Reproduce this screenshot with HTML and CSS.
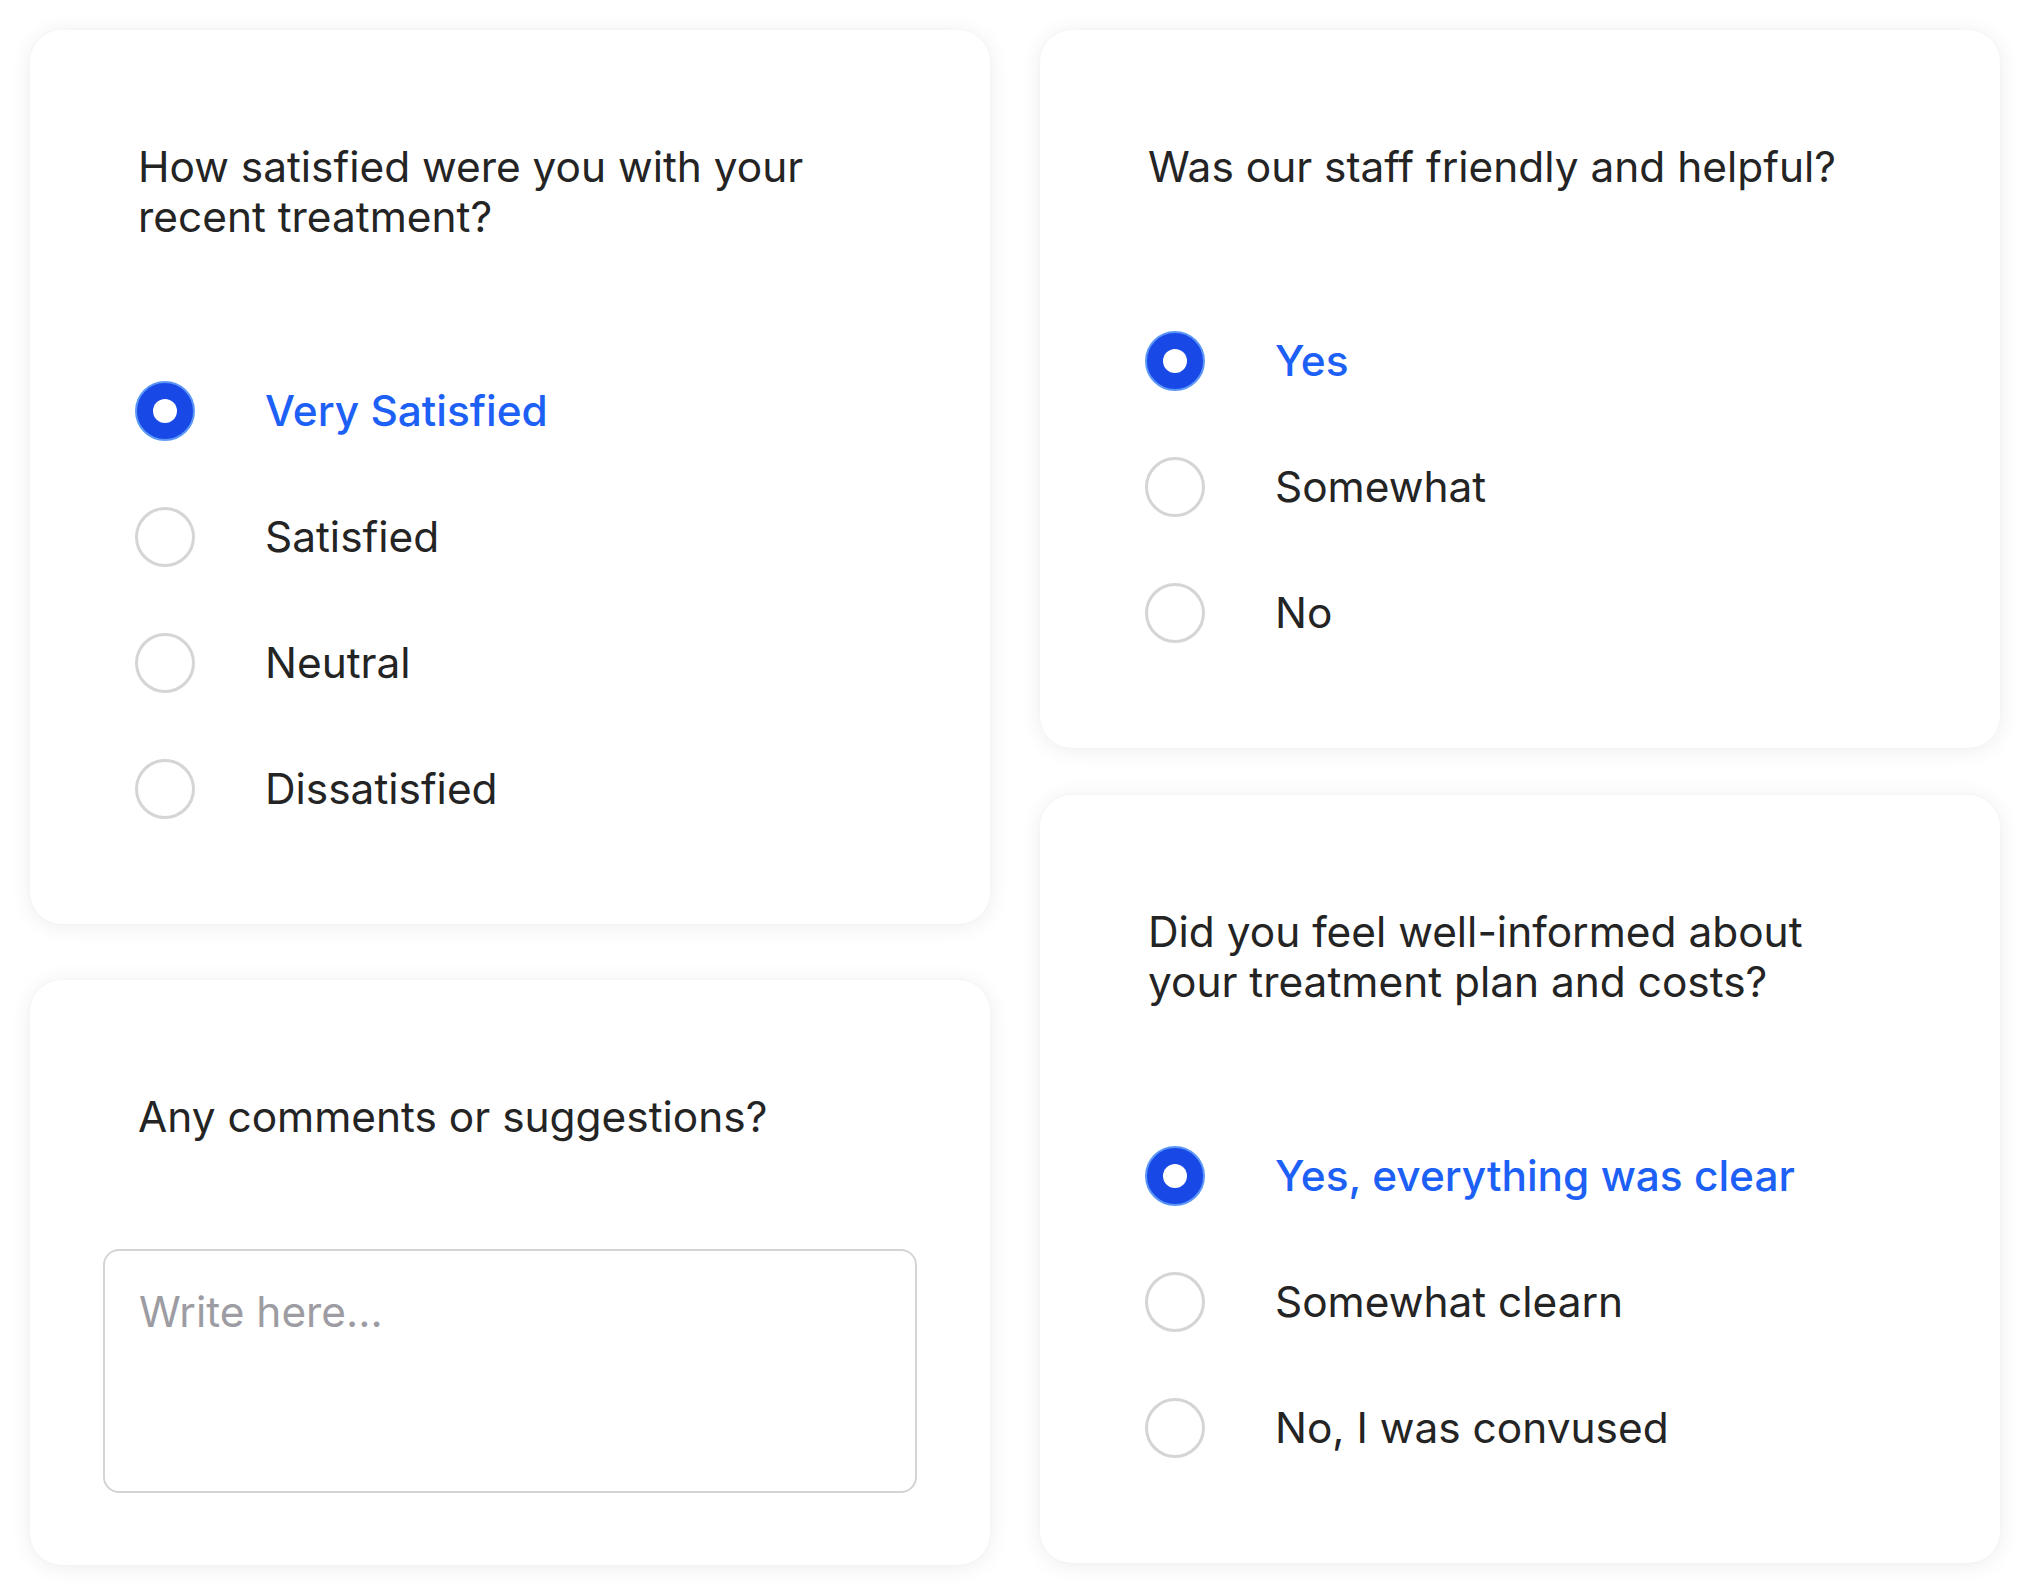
FILE: index.html
```html
<!DOCTYPE html>
<html lang="en">
<head>
<meta charset="utf-8">
<title>Patient feedback survey</title>
<link rel="stylesheet" href="styles.css">
</head>
<body>
<main class="page">
  <div class="col col-left">
    <section class="card">
      <h2 class="question">How satisfied were you with your recent treatment?</h2>
      <div class="options">
        <div class="option selected"><span class="radio"></span><span class="label">Very Satisfied</span></div>
        <div class="option"><span class="radio"></span><span class="label">Satisfied</span></div>
        <div class="option"><span class="radio"></span><span class="label">Neutral</span></div>
        <div class="option"><span class="radio"></span><span class="label">Dissatisfied</span></div>
      </div>
    </section>
    <section class="card card-comment">
      <h2 class="question">Any comments or suggestions?</h2>
      <div class="textarea"><span class="placeholder">Write here...</span></div>
    </section>
  </div>
  <div class="col col-right">
    <section class="card">
      <h2 class="question">Was our staff friendly and helpful?</h2>
      <div class="options">
        <div class="option selected"><span class="radio"></span><span class="label">Yes</span></div>
        <div class="option"><span class="radio"></span><span class="label">Somewhat</span></div>
        <div class="option"><span class="radio"></span><span class="label">No</span></div>
      </div>
    </section>
    <section class="card">
      <h2 class="question">Did you feel well-informed about your treatment plan and costs?</h2>
      <div class="options">
        <div class="option selected"><span class="radio"></span><span class="label">Yes, everything was clear</span></div>
        <div class="option"><span class="radio"></span><span class="label">Somewhat clearn</span></div>
        <div class="option"><span class="radio"></span><span class="label">No, I was convused</span></div>
      </div>
    </section>
  </div>
</main>
</body>
</html>
```
FILE: styles.css
```css
* { box-sizing: border-box; }

html, body {
  margin: 0;
  padding: 0;
  background: #ffffff;
}

body {
  font-family: Inter, "Noto Sans", "Liberation Sans", sans-serif;
  color: #242424;
  width: 2031px;
  height: 1596px;
  overflow: hidden;
}

.page {
  display: flex;
  gap: 50px;
  padding: 30px 31px 0 30px;
}

.col {
  flex: 0 0 960px;
  display: flex;
  flex-direction: column;
}

.col-left { gap: 56px; }
.col-right { gap: 47px; }

.card {
  background: #ffffff;
  border-radius: 32px;
  box-shadow: 0 2px 22px rgba(0, 0, 0, 0.075), 0 0 3px rgba(0, 0, 0, 0.03);
  padding: 112px 60px 105px 105px;
}

.question {
  margin: 0 0 139px 3px;
  max-width: 725px;
  font-size: 42.4px;
  line-height: 50px;
  font-weight: 400;
  color: #242424;
  letter-spacing: 0;
}

.options {
  display: flex;
  flex-direction: column;
  gap: 66px;
}

.option {
  display: flex;
  align-items: center;
  height: 60px;
  gap: 70px;
}

.radio {
  position: relative;
  flex: 0 0 60px;
  width: 60px;
  height: 60px;
  border-radius: 50%;
  border: 3px solid #d5d5d5;
  background: #ffffff;
}

.label {
  font-size: 42.4px;
  line-height: 60px;
  color: #242424;
}

.option.selected .radio {
  background: #1848e6;
  border: 2px solid #5c97f8;
}

.option.selected .radio::after {
  content: "";
  position: absolute;
  left: 50%;
  top: 50%;
  width: 24px;
  height: 24px;
  margin: -12px 0 0 -12px;
  border-radius: 50%;
  background: #ffffff;
}

.option.selected .label {
  color: #1d60f6;
  font-weight: 500;
}

.card-comment {
  padding: 112px 73px 72px 73px;
}

.card-comment .question {
  margin: 0 0 107px 35px;
}

.textarea {
  height: 244px;
  border: 2px solid #d4d4d6;
  border-radius: 16px;
  padding: 36px 34px;
}

.placeholder {
  display: block;
  font-size: 42.4px;
  line-height: 50px;
  color: #9c9ca2;
}
```
